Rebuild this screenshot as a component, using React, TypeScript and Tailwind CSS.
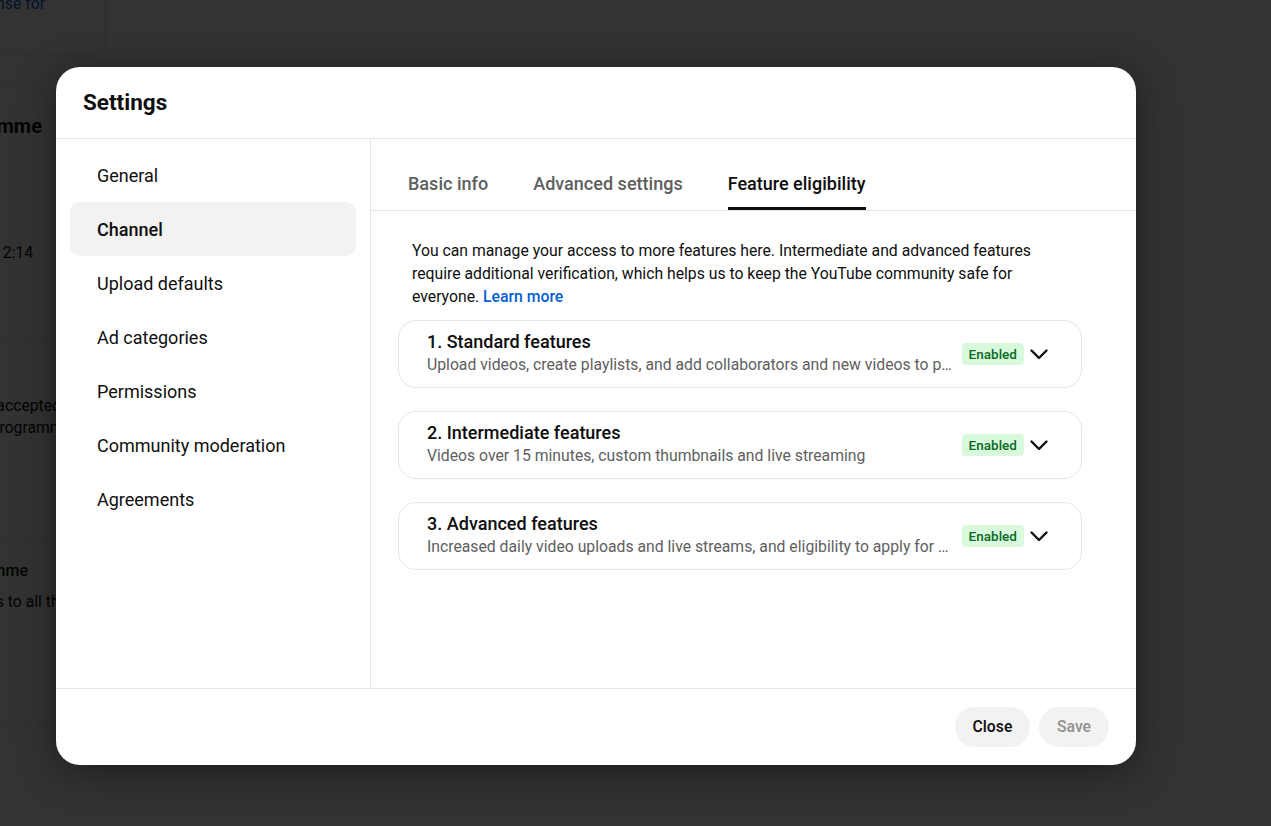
import { ReactNode } from "react";

const navItems = [
  "General",
  "Channel",
  "Upload defaults",
  "Ad categories",
  "Permissions",
  "Community moderation",
  "Agreements",
];

const tabs = ["Basic info", "Advanced settings", "Feature eligibility"];

const features = [
  {
    title: "1. Standard features",
    text: "Upload videos, create playlists, and add collaborators and new videos to playlists you own",
  },
  {
    title: "2. Intermediate features",
    text: "Videos over 15 minutes, custom thumbnails and live streaming",
  },
  {
    title: "3. Advanced features",
    text: "Increased daily video uploads and live streams, and eligibility to apply for monetisation",
  },
];

// medium weight: try the named face first, fall back to Roboto 500
const medium = "font-['Roboto_Medium','Roboto',sans-serif] font-medium";

const Chevron = () => (
  <svg width="24" height="24" viewBox="0 0 24 24" fill="none">
    <polyline
      points="4.5,8.5 12,16 19.5,8.5"
      stroke="#0f0f0f"
      strokeWidth="2.4"
      strokeLinecap="round"
      strokeLinejoin="round"
    />
  </svg>
);

const BgLine = ({ pr, className, children }: { pr: string; className: string; children: ReactNode }) => (
  <div className={`flex justify-end whitespace-nowrap ${pr} ${className}`}>{children}</div>
);

const FeatureCard = ({ title, text }: { title: string; text: string }) => (
  <div className="flex h-[68px] items-center rounded-[18px] border border-[#e5e5e5] pb-[10px] pl-[28px] pr-[30px] pt-[10px]">
    <div className="flex min-w-0 flex-1 flex-col">
      <span className={`text-[18px] leading-[22px] text-[#0f0f0f] ${medium}`}>{title}</span>
      <span className="truncate text-[15.75px] leading-[24px] text-[#606060]">{text}</span>
    </div>
    <span
      className={`ml-[6px] rounded-[4px] bg-[#d9f9dd] px-[7px] text-[13.5px] leading-[22px] text-[#0b6b25] ${medium}`}
    >
      Enabled
    </span>
    <span className="ml-[3px]">
      <Chevron />
    </span>
  </div>
);

export default function App() {
  return (
    <div className="relative h-[826px] w-full overflow-hidden bg-white font-['Roboto',sans-serif] text-[#0f0f0f]">
      {/* page behind the dialog */}
      <div className="flex w-[106px] flex-col overflow-hidden">
        <div className="flex h-[55px] justify-end overflow-hidden rounded-br-[12px] border-b border-r border-[#e5e5e5] pr-[60px]">
          <span className="-mt-[7px] whitespace-nowrap text-[15.75px] leading-[22px] text-[#065fd4]">
            Apply for a license for
          </span>
        </div>
        <div className="mt-[27px] h-[259px] border-t border-[#e5e5e5]">
          <BgLine pr="pr-[64px]" className="mt-[29px] text-[20px] font-bold leading-[28px]">
            YouTube Partner Programme
          </BgLine>
          <BgLine pr="pr-[73px]" className="mt-[101px] text-[15.75px] leading-[23px]">
            Last updated: 12:14
          </BgLine>
        </div>
        <div className="h-[199px] border-t border-[#e5e5e5]">
          <BgLine pr="pr-[45px]" className="mt-[53px] text-[15.75px] leading-[22px]">
            You have accepted
          </BgLine>
          <BgLine pr="pr-[34px]" className="text-[15.75px] leading-[22px]">
            the YouTube Partner Programme
          </BgLine>
        </div>
        <div className="h-[181px] border-t border-[#e5e5e5]">
          <BgLine pr="pr-[78px]" className="mt-[19px] text-[16px] font-medium leading-[22px]">
            Shopping Programme
          </BgLine>
          <BgLine pr="pr-[38px]" className="mt-[9px] text-[15.75px] leading-[22px]">
            Gives access to all the
          </BgLine>
        </div>
        <div className="border-t border-[#e5e5e5]" />
      </div>

      <div className="absolute inset-0 bg-black/80" />

      {/* dialog */}
      <div className="absolute left-[56px] top-[67px] flex h-[698px] w-[1080px] flex-col overflow-hidden rounded-[24px] bg-white shadow-[0_6px_40px_rgba(0,0,0,0.45)]">
        <div className="flex h-[72px] shrink-0 items-center border-b border-[#e5e5e5] pl-[27px]">
          <h1 className="text-[22.5px] font-bold text-[#0f0f0f]">Settings</h1>
        </div>

        <div className="flex min-h-0 flex-1">
          <nav className="flex w-[315px] shrink-0 flex-col border-r border-[#e5e5e5] px-[14px] pt-[9px]">
            {navItems.map((item) => (
              <div
                key={item}
                className={`flex h-[54px] items-center rounded-[10px] pl-[27px] text-[18px] text-[#0f0f0f] ${
                  item === "Channel" ? `bg-[#f2f2f2] ${medium}` : ""
                }`}
              >
                {item}
              </div>
            ))}
          </nav>

          <div className="flex min-w-0 flex-1 flex-col">
            <div className="flex h-[72px] shrink-0 items-end gap-[45px] border-b border-[#e5e5e5] pl-[37px]">
              {tabs.map((tab) => {
                const active = tab === "Feature eligibility";
                return (
                  <div key={tab} className="flex h-[48px] flex-col">
                    <span
                      className={`flex flex-1 items-center pb-[3px] text-[18px] ${medium} ${
                        active ? "text-[#0f0f0f]" : "text-[#606060]"
                      }`}
                    >
                      {tab}
                    </span>
                    <span className={`h-[3px] ${active ? "bg-[#0f0f0f]" : ""}`} />
                  </div>
                );
              })}
            </div>

            <div className="flex w-[711px] flex-col pl-[27px] pt-[28px]">
              <p className="px-[14px] text-[15.75px] leading-[23px] text-[#0f0f0f]">
                You can manage your access to more features here. Intermediate and advanced features require
                additional verification, which helps us to keep the YouTube community safe for everyone.{" "}
                <span className={`text-[#065fd4] ${medium}`}>Learn more</span>
              </p>
              <div className="mt-[12px] flex flex-col gap-[23px]">
                {features.map((f) => (
                  <FeatureCard key={f.title} title={f.title} text={f.text} />
                ))}
              </div>
            </div>
          </div>
        </div>

        <div className="flex h-[77px] shrink-0 items-center justify-end gap-[9px] border-t border-[#e5e5e5] pr-[27px]">
          <button className={`h-[40px] w-[75px] rounded-full bg-[#f2f2f2] text-[15.75px] text-[#0f0f0f] ${medium}`}>
            Close
          </button>
          <button className={`h-[40px] w-[70px] rounded-full bg-[#f2f2f2] text-[15.75px] text-[#909090] ${medium}`}>
            Save
          </button>
        </div>
      </div>
    </div>
  );
}
